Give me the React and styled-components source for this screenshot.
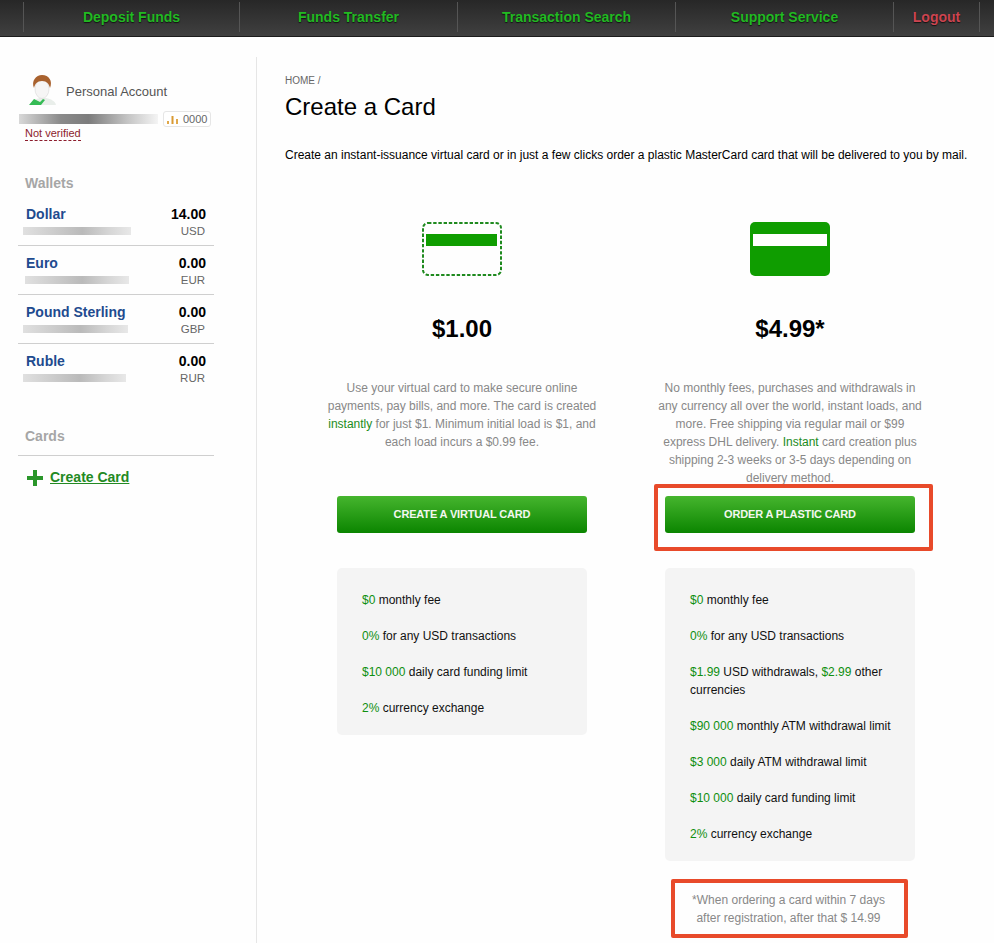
import React from "react";
import styled, { createGlobalStyle } from "styled-components";

const GlobalStyle = createGlobalStyle`
  html, body {
    margin: 0;
    padding: 0;
    background: #fefefe;
    font-family: "Liberation Sans", Arial, sans-serif;
    height: 943px;
    overflow: hidden;
  }
  * { box-sizing: border-box; }
`;

const TopBar = styled.nav`
  display: flex;
  align-items: center;
  height: 37px;
  padding-left: 23px;
  background: linear-gradient(#272727, #404040);
  border-bottom: 1px solid #1c1c1c;
`;
const TopItem = styled.a`
  width: ${(props) => props.width || "218px"};
  height: 30px;
  margin-bottom: 2px;
  display: flex;
  align-items: center;
  justify-content: center;
  border-left: 1px solid #555;
  border-right: ${(props) => (props.last ? "1px solid #555" : "none")};
  font-size: 14px;
  font-weight: bold;
  color: ${(props) => props.color || "#22b922"};
  text-shadow: 0 1px 1px #111;
`;

const Layout = styled.div`
  display: flex;
  padding-top: 20px;
`;
const Sidebar = styled.aside`
  width: 257px;
  height: 886px;
  flex-shrink: 0;
  border-right: 1px solid #e6e6e6;
  padding: 18px 42px 0 18px;
`;
const AccountRow = styled.div`
  display: flex;
  align-items: flex-end;
  gap: 9px;
  padding-left: 10px;
  font-size: 13px;
  line-height: 15px;
  color: #555;
  span {
    margin-bottom: 6px;
  }
`;
const AccountMeta = styled.div`
  display: flex;
  align-items: center;
  gap: 5px;
  margin-top: 6px;
  margin-left: 1px;
`;
const Smudge = styled.div`
  width: ${(props) => props.width};
  height: ${(props) => props.height || "8px"};
  margin-left: ${(props) => props.left || "0"};
  margin-top: ${(props) => props.top || "0"};
  background: ${(props) =>
    props.dark
      ? "linear-gradient(90deg, #d8d8d8, #8a8a8a 30%, #7c7c7c 50%, #c4c4c4 78%, #f4f4f4)"
      : "linear-gradient(90deg, #e0e0e0, #cfcfcf 25%, #bababa 55%, #d6d6d6 80%, #e8e8e8)"};
`;
const Badge = styled.div`
  display: flex;
  align-items: center;
  gap: 4px;
  width: 48px;
  height: 16px;
  padding-left: 3px;
  border: 1px solid #e6e6e6;
  border-radius: 3px;
  background: #fff;
  font-size: 11px;
  color: #666;
`;
const NotVerified = styled.a`
  display: block;
  width: fit-content;
  margin: 0 0 0 7px;
  font-size: 11px;
  line-height: 13px;
  color: #8c1c2c;
  border-bottom: 1px dashed #8c1c2c;
`;
const SideTitle = styled.h3`
  margin: ${(props) => props.margin};
  padding-left: 7px;
  font-size: 14px;
  line-height: 16px;
  font-weight: bold;
  color: #a6a6a6;
`;
const WalletList = styled.div`
  margin-top: 6px;
`;
const WalletRow = styled.div`
  display: flex;
  justify-content: space-between;
  height: 49px;
  padding: 8px 8px 0 0;
  border-bottom: ${(props) => (props.last ? "none" : "1px solid #cfcfcf")};
`;
const WalletName = styled.div`
  padding-left: 8px;
  font-size: 14px;
  line-height: 18px;
  font-weight: bold;
  color: #1f4b8f;
`;
const WalletAmount = styled.div`
  font-size: 14px;
  line-height: 18px;
  font-weight: bold;
  color: #000;
  text-align: right;
`;
const WalletCurrency = styled.div`
  padding-right: 1px;
  font-size: 11.5px;
  line-height: 17px;
  color: #666;
  text-align: right;
`;
const CardsHead = styled.div`
  padding-bottom: 11px;
  border-bottom: 1px solid #cfcfcf;
`;
const CreateLink = styled.a`
  display: flex;
  align-items: center;
  gap: 7px;
  margin: 13px 0 0 9px;
  font-size: 14px;
  line-height: 17px;
  font-weight: bold;
  color: #238a23;
  span {
    text-decoration: underline;
  }
`;

const Main = styled.main`
  flex: 1;
  padding: 0 0 0 28px;
`;
const Crumb = styled.div`
  margin-top: 18px;
  font-size: 10px;
  line-height: 12px;
  color: #666;
`;
const Title = styled.h1`
  margin: 5px 0 0;
  font-size: 24px;
  line-height: 30px;
  font-weight: normal;
  color: #000;
`;
const Intro = styled.p`
  margin: 25px 0 0;
  font-size: 12px;
  line-height: 16px;
  color: #000;
  white-space: nowrap;
`;
const Columns = styled.div`
  display: flex;
  gap: 50px;
  margin: 59px 0 0 38px;
`;
const Column = styled.section`
  position: relative;
  width: 278px;
  display: flex;
  flex-direction: column;
  align-items: center;
`;
const Price = styled.div`
  margin-top: 38px;
  font-size: 24px;
  line-height: 30px;
  font-weight: bold;
  color: #000;
`;
const Description = styled.p`
  height: 117px;
  margin: 35px 0 0;
  font-size: 12px;
  line-height: 18px;
  color: #888;
  text-align: center;
  em {
    font-style: normal;
    color: #1c8c1c;
  }
`;
const OrderButton = styled.button`
  width: 250px;
  height: 37px;
  padding: 0 0 2px;
  border: none;
  border-radius: 3px;
  background: linear-gradient(#46b52e, #0b8500);
  font-family: inherit;
  font-size: 11px;
  font-weight: bold;
  letter-spacing: -0.15px;
  color: #f2f7ef;
`;
const FeaturePanel = styled.ul`
  width: 250px;
  margin: 35px 0 0;
  padding: 23px 20px 0 25px;
  list-style: none;
  border-radius: 5px;
  background: #f4f4f4;
`;
const Feature = styled.li`
  margin-bottom: 18px;
  font-size: 12px;
  line-height: 18px;
  color: #111;
  b {
    font-weight: normal;
    color: #0f8f0f;
  }
`;
const Footnote = styled.p`
  margin: 30px 3px 0 0;
  font-size: 12px;
  line-height: 18px;
  color: #888;
  text-align: center;
`;
const Callout = styled.div`
  position: absolute;
  left: ${(props) => props.left};
  top: ${(props) => props.top};
  width: ${(props) => props.width};
  height: ${(props) => props.height};
  border: 4px solid #e84a2a;
  border-radius: 2px;
  pointer-events: none;
`;

const Avatar = () => (
  <svg width="29" height="30" viewBox="0 0 29 30">
    <path d="M2 30c1-4 5-6 10-7h6c5 1 9 3 10 7z" fill="#e9eeea" />
    <path d="M1 30l5-6 6 3 3-3 2 1-4 5z" fill="#35bb55" />
    <ellipse cx="14" cy="14" rx="7" ry="9.5" fill="#f6f5f5" stroke="#d8d6d6" strokeWidth="0.6" />
    <path d="M6 13C3 6 8 0 14 0c7 0 11 6 8 13-1-4-3-7-8-7s-7 3-8 7z" fill="#a9622f" />
  </svg>
);

const BarsIcon = () => (
  <svg width="12" height="9" viewBox="0 0 12 9">
    <rect x="0" y="6" width="2" height="3" fill="#e0a84a" />
    <rect x="4.5" y="1" width="2" height="8" fill="#d99a33" />
    <rect x="9" y="4" width="2" height="5" fill="#e0a84a" />
  </svg>
);

const PlusIcon = () => (
  <svg width="16" height="16" viewBox="0 0 16 16">
    <path d="M6 0h4v6h6v4h-6v6H6v-6H0V6h6z" fill="#2a962a" />
  </svg>
);

const VirtualCardIcon = () => (
  <svg width="80" height="54" viewBox="0 0 80 54">
    <rect x="1" y="1" width="78" height="52" rx="5" fill="none" stroke="#1f8a1f" strokeWidth="2" strokeDasharray="3.4 1.8" />
    <rect x="4" y="12" width="71" height="12" fill="#0f9d00" />
  </svg>
);

const PlasticCardIcon = () => (
  <svg width="80" height="54" viewBox="0 0 80 54">
    <rect width="80" height="54" rx="5" fill="#0f9d00" />
    <rect x="3" y="12" width="74" height="12" fill="#fff" />
  </svg>
);

const wallets = [
  { name: "Dollar", amount: "14.00", currency: "USD", bar: "108px", left: "5px" },
  { name: "Euro", amount: "0.00", currency: "EUR", bar: "104px", left: "7px" },
  { name: "Pound Sterling", amount: "0.00", currency: "GBP", bar: "105px", left: "5px" },
  { name: "Ruble", amount: "0.00", currency: "RUR", bar: "103px", left: "5px" },
];

const App = () => {
  return (
    <>
      <GlobalStyle />
      <TopBar>
        <TopItem width="216px">Deposit Funds</TopItem>
        <TopItem>Funds Transfer</TopItem>
        <TopItem>Transaction Search</TopItem>
        <TopItem>Support Service</TopItem>
        <TopItem width="87px" color="#cc4450" last>
          Logout
        </TopItem>
      </TopBar>
      <Layout>
        <Sidebar>
          <AccountRow>
            <Avatar />
            <span>Personal Account</span>
          </AccountRow>
          <AccountMeta>
            <Smudge width="139px" height="10px" dark />
            <Badge>
              <BarsIcon />
              0000
            </Badge>
          </AccountMeta>
          <NotVerified>Not verified</NotVerified>
          <SideTitle margin="34px 0 0">Wallets</SideTitle>
          <WalletList>
            {wallets.map((wallet, index) => (
              <WalletRow key={wallet.name} last={index === wallets.length - 1}>
                <div>
                  <WalletName>{wallet.name}</WalletName>
                  <Smudge width={wallet.bar} left={wallet.left} top="4px" />
                </div>
                <div>
                  <WalletAmount>{wallet.amount}</WalletAmount>
                  <WalletCurrency>{wallet.currency}</WalletCurrency>
                </div>
              </WalletRow>
            ))}
          </WalletList>
          <CardsHead>
            <SideTitle margin="35px 0 0">Cards</SideTitle>
          </CardsHead>
          <CreateLink>
            <PlusIcon />
            <span>Create Card</span>
          </CreateLink>
        </Sidebar>
        <Main>
          <Crumb>HOME /</Crumb>
          <Title>Create a Card</Title>
          <Intro>
            Create an instant-issuance virtual card or in just a few clicks order a plastic MasterCard card that will be
            delivered to you by mail.
          </Intro>
          <Columns>
            <Column>
              <VirtualCardIcon />
              <Price>$1.00</Price>
              <Description>
                Use your virtual card to make secure online
                <br />
                payments, pay bills, and more. The card is created
                <br />
                <em>instantly</em> for just $1. Minimum initial load is $1, and
                <br />
                each load incurs a $0.99 fee.
              </Description>
              <OrderButton>CREATE A VIRTUAL CARD</OrderButton>
              <FeaturePanel>
                <Feature><b>$0</b> monthly fee</Feature>
                <Feature><b>0%</b> for any USD transactions</Feature>
                <Feature><b>$10 000</b> daily card funding limit</Feature>
                <Feature><b>2%</b> currency exchange</Feature>
              </FeaturePanel>
            </Column>
            <Column>
              <PlasticCardIcon />
              <Price>$4.99*</Price>
              <Description>
                No monthly fees, purchases and withdrawals in
                <br />
                any currency all over the world, instant loads, and
                <br />
                more. Free shipping via regular mail or $99
                <br />
                express DHL delivery. <em>Instant</em> card creation plus
                <br />
                shipping 2-3 weeks or 3-5 days depending on
                <br />
                delivery method.
              </Description>
              <OrderButton>ORDER A PLASTIC CARD</OrderButton>
              <FeaturePanel>
                <Feature><b>$0</b> monthly fee</Feature>
                <Feature><b>0%</b> for any USD transactions</Feature>
                <Feature><b>$1.99</b> USD withdrawals, <b>$2.99</b> other currencies</Feature>
                <Feature><b>$90 000</b> monthly ATM withdrawal limit</Feature>
                <Feature><b>$3 000</b> daily ATM withdrawal limit</Feature>
                <Feature><b>$10 000</b> daily card funding limit</Feature>
                <Feature><b>2%</b> currency exchange</Feature>
              </FeaturePanel>
              <Footnote>
                *When ordering a card within 7 days
                <br />
                after registration, after that $ 14.99
              </Footnote>
              <Callout left="3px" top="262px" width="279px" height="67px" />
              <Callout left="20px" top="657px" width="237px" height="59px" />
            </Column>
          </Columns>
        </Main>
      </Layout>
    </>
  );
};

export default App;
